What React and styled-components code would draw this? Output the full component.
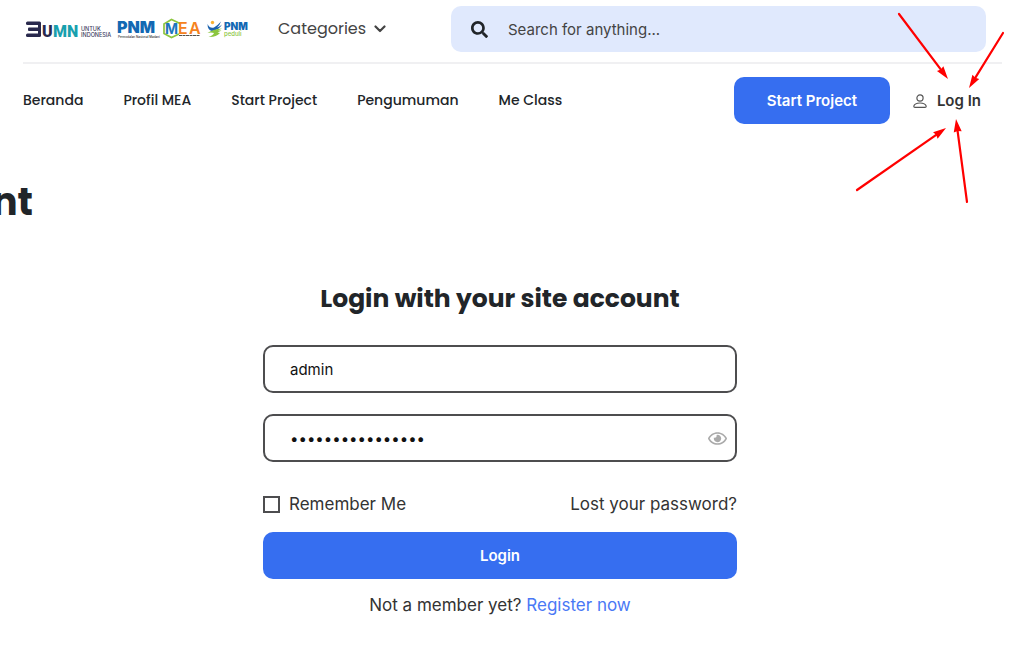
import React from 'react'
import styled, { createGlobalStyle } from 'styled-components'
import { FaSearch, FaRegEye } from 'react-icons/fa'

const GlobalStyle = createGlobalStyle`
* {
  box-sizing: border-box;
}
body {
  margin: 0;
  background: #fff;
  color: #333;
  font-family: Inter, "Liberation Sans", sans-serif;
  overflow-x: hidden;
}
a {
  color: inherit;
  text-decoration: none;
}
`;

const Header = styled.header`
position: relative;
padding: 6px 22px 0 23px;
`;

const TopBar = styled.div`
display: flex;
align-items: center;
padding-bottom: 10px;
padding-right: 16px;
border-bottom: 2px solid #f0f0f2;
`;

const Logos = styled.a`
display: flex;
flex: none;
width: 228px;
`;

const CategoryButton = styled.button`
display: flex;
align-items: center;
gap: 8px;
width: 160px;
margin: 0 13px 0 27px;
padding: 0;
border: 0;
background: none;
color: #444;
font-family: Poppins, Inter, sans-serif;
font-size: 16px;
line-height: 24px;
text-align: left;
`;

const SearchBox = styled.label`
display: flex;
align-items: center;
flex: 1;
gap: 20px;
height: 46px;
padding: 0 20px;
border-radius: 10px;
background: #e0e9fd;
color: #212529;
`;

const SearchInput = styled.input`
flex: 1;
min-width: 0;
padding: 0;
border: 0;
outline: 0;
background: none;
font-family: inherit;
font-size: 15px;
&::placeholder {
  color: #444;
  opacity: 1;
}
`;

const NavBar = styled.div`
display: flex;
align-items: center;
justify-content: space-between;
padding: 13px 21px 0 0;
`;

const Nav = styled.nav`
display: flex;
gap: 40px;
padding-bottom: 2px;
`;

const NavLink = styled.a`
color: #212529;
font-family: Poppins, Inter, sans-serif;
font-size: 14px;
font-weight: 500;
line-height: 20px;
`;

const Actions = styled.div`
display: flex;
align-items: center;
gap: 23px;
`;

const Button = styled.button`
width: ${props => props.$wide ? '100%' : '156px'};
height: 47px;
padding: 0;
border: 0;
border-radius: 10px;
background: #366ef0;
color: #fff;
font-family: inherit;
font-size: 15px;
font-weight: 600;
`;

const LoginLink = styled.a`
display: flex;
align-items: center;
gap: 10px;
color: #333;
font-size: 15px;
font-weight: 600;
`;

const Arrows = styled.svg`
position: absolute;
top: 0;
right: 0;
pointer-events: none;
`;

const PageTitle = styled.h1`
display: flex;
justify-content: flex-end;
width: 33px;
margin: 54px 0 0;
overflow: hidden;
color: #212529;
font-family: Poppins, Inter, sans-serif;
font-size: 38px;
font-weight: 700;
line-height: 48px;
`;

const Main = styled.main`
display: flex;
flex-direction: column;
align-items: center;
padding: 53px 24px 24px 0;
`;

const FormTitle = styled.h2`
margin: 0 0 26px;
color: #212529;
font-family: Poppins, Inter, sans-serif;
font-size: 25px;
font-weight: 700;
line-height: 40px;
`;

const Form = styled.form`
display: flex;
flex-direction: column;
gap: 21px;
width: 100%;
max-width: 474px;
`;

const Field = styled.div`
display: flex;
align-items: center;
height: 48px;
padding: 0 8px 0 25px;
border: 2px solid #4d4d4f;
border-radius: 10px;
`;

const FieldInput = styled.input`
flex: 1;
min-width: 0;
padding: 0;
border: 0;
outline: 0;
background: none;
color: #111;
font-family: inherit;
font-size: 15px;
`;

const EyeButton = styled.button`
display: flex;
padding: 0;
border: 0;
background: none;
color: #aaa;
`;

const Options = styled.div`
display: flex;
align-items: center;
justify-content: space-between;
margin: 9px 0 -5px;
font-size: 17px;
line-height: 24px;
`;

const Remember = styled.label`
display: flex;
align-items: center;
gap: 9px;
`;

const Checkbox = styled.input`
appearance: none;
width: 17px;
height: 17px;
margin: 0;
border: 2px solid #4d4d4f;
background: #fff;
`;

const Register = styled.p`
margin: 14px 0 0;
font-size: 17px;
line-height: 24px;
`;

const RegisterLink = styled.a`
color: #4a78f5;
`;

const links = ['Beranda', 'Profil MEA', 'Start Project', 'Pengumuman', 'Me Class'];

const arrows = [
    [55, 14, 104, 79],
    [159, 33, 125, 88],
    [13, 190, 102, 128],
    [123, 202, 112, 119],
];

const Arrow = ({ from }) => {
    const [x1, y1, x2, y2] = from;
    const angle = Math.atan2(y2 - y1, x2 - x1) * 180 / Math.PI;
    const length = Math.hypot(x2 - x1, y2 - y1);
    return (
        <g transform={`translate(${x1} ${y1}) rotate(${angle})`}>
            <path d={`M0 0H${length - 8}`} stroke="#f00" strokeWidth="2.2" strokeLinecap="round" />
            <path d={`M${length} 0l-13 -4l1 4l-1 4z`} fill="#f00" />
        </g>
    )
}

const LogoStrip = () => (
    <svg width="228" height="24" viewBox="23 17 228 24" fontFamily="Inter, sans-serif" role="img" aria-label="BUMN, PNM, MEA, PNM Peduli">
        {/* BUMN */}
        <g fill="#29294d">
            <rect x="26" y="21.500" width="15" height="3.500" rx="1.500" />
            <rect x="28" y="27.500" width="12" height="3.500" rx="1" />
            <rect x="26" y="33.500" width="15" height="3.500" rx="1.500" />
            <rect x="38" y="22.500" width="3" height="13.500" rx="1.500" />
        </g>
        <g fontFamily="Roboto, sans-serif" fontSize="16" fontWeight="900">
            <text x="42" y="37" fill="#29294d">U</text>
            <text x="53" y="37" fill="#18a0ae">MN</text>
        </g>
        <g fontSize="5.500" fontWeight="500" fill="#3c3c5c">
            <text x="81" y="31">UNTUK</text>
            <text x="81" y="37">INDONESIA</text>
        </g>
        {/* PNM */}
        <text x="117" y="33" fontSize="16" fontWeight="900" fill="#1268b3">PNM</text>
        <text x="118" y="38" fontSize="3" fontWeight="500" fill="#333">Permodalan Nasional Madani</text>
        {/* MEA */}
        <path d="M180 23.500L171.500 19.500L164 24V33.500L171.500 37.500L179 34" fill="none" stroke="#8cc63f" strokeWidth="1.700" />
        <text x="165" y="34" fontSize="14" fontWeight="700" fill="#1c75bc">M</text>
        <text x="178" y="34" fontSize="16" fontWeight="600" fill="#f58220">E</text>
        <text x="189" y="34" fontSize="16" fontWeight="600" fill="#f58220">A</text>
        <path d="M179 35.500H200" stroke="#55514b" strokeWidth="1" strokeDasharray="3 .5" />
        {/* PNM Peduli */}
        <circle cx="212.500" cy="22.500" r="1.700" fill="#f9b233" />
        <path d="M207.500 24Q210 29 214 27.500Q217 26 221 21.500Q220 25 217 27.500Q220 26.500 222 24.500Q219 30 212 31Q207.500 30 207.500 24Z" fill="#1b62ae" />
        <path d="M207.500 33Q213 29 222 28.500L218 30.500L221.500 30.500L217.500 32.500L220 33Q216 37.500 208.500 37Q213 35.500 214 33Q211 32 207.500 33Z" fill="#8cc63f" />
        <text x="224" y="30" fontSize="10" fontWeight="900" fill="#1268b3">PNM</text>
        <text x="224" y="36" fontSize="6" fontWeight="500" fill="#8cc63f">peduli</text>
    </svg>
)

const UserIcon = () => (
    <svg width="14" height="14" viewBox="0 0 14 14" fill="none" stroke="#555" strokeWidth="1.200">
        <circle cx="7" cy="4" r="3.100" />
        <path d="M.8 12.200C1.400 10 3.800 9 7 9S12.600 10 13.200 12.200Q13.200 13.300 12 13.300H2Q.8 13.300 .8 12.200Z" />
    </svg>
)

const App = () => {
    return (
        <>
            <GlobalStyle />
            <Header>
                <TopBar>
                    <Logos href="#"><LogoStrip /></Logos>
                    <CategoryButton type="button">
                        Categories
                        <svg width="12" height="8" viewBox="0 0 12 8" fill="none" stroke="#444" strokeWidth="2.200" strokeLinecap="round" strokeLinejoin="round">
                            <path d="M1.500 1.500L6 6L10.500 1.500" />
                        </svg>
                    </CategoryButton>
                    <SearchBox>
                        <FaSearch size={17} />
                        <SearchInput type="text" placeholder="Search for anything..." aria-label="Search" />
                    </SearchBox>
                </TopBar>
                <NavBar>
                    <Nav>
                        {links.map(link => <NavLink href="#" key={link}>{link}</NavLink>)}
                    </Nav>
                    <Actions>
                        <Button type="button">Start Project</Button>
                        <LoginLink href="#login"><UserIcon />Log In</LoginLink>
                    </Actions>
                </NavBar>
                <Arrows width="180" height="210" viewBox="0 0 180 210" aria-hidden="true">
                    {arrows.map((arrow, i) => <Arrow from={arrow} key={i} />)}
                </Arrows>
            </Header>
            <PageTitle>nt</PageTitle>
            <Main>
                <FormTitle>Login with your site account</FormTitle>
                <Form id="login">
                    <Field>
                        <FieldInput type="text" defaultValue="admin" aria-label="Username" />
                    </Field>
                    <Field>
                        <FieldInput type="password" defaultValue="administrator123" aria-label="Password" />
                        <EyeButton type="button" aria-label="Show password"><FaRegEye size={19} /></EyeButton>
                    </Field>
                    <Options>
                        <Remember>
                            <Checkbox type="checkbox" />
                            Remember Me
                        </Remember>
                        <a href="#">Lost your password?</a>
                    </Options>
                    <Button type="button" $wide>Login</Button>
                </Form>
                <Register>
                    Not a member yet? <RegisterLink href="#">Register now</RegisterLink>
                </Register>
            </Main>
        </>
    )
}

export default App
